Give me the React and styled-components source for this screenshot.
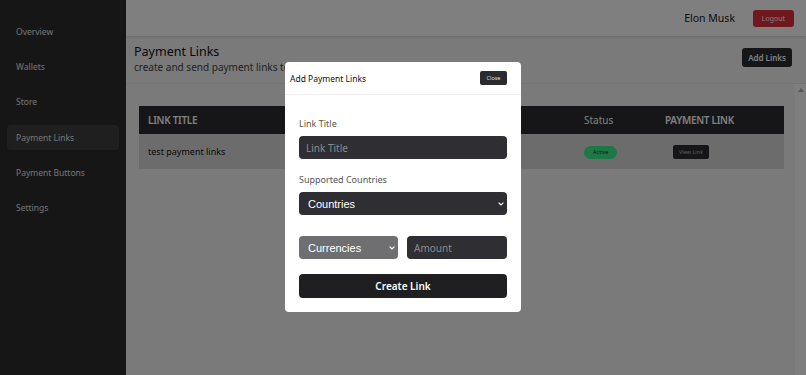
import styled, { createGlobalStyle } from 'styled-components'

const GlobalStyle = createGlobalStyle`
  html, body { margin: 0; padding: 0; height: 100%; }
  body { font-family: "Noto Sans", "Open Sans", sans-serif; background: #f4f4f4; }
  #root { height: 100%; }
  * { box-sizing: border-box; }
`

const NAV = ['Overview', 'Wallets', 'Store', 'Payment Links', 'Payment Buttons', 'Settings']

const Chevron = () => (
  <svg width="6" height="4" viewBox="0 0 6 4">
    <path d="M0.6 0.6 L3 3 L5.4 0.6" fill="none" stroke="#fff" strokeWidth="1.2" />
  </svg>
)

const Dropdown = ({ label, grey }) => (
  <SelectWrap>
    <Select $grey={grey}>
      <option>{label}</option>
    </Select>
    <ChevronBox><Chevron /></ChevronBox>
  </SelectWrap>
)

const App = () => {
  return (
    <Page>
      <GlobalStyle />
      <Sidebar>
        {NAV.map((n) => (
          <NavItem key={n} $active={n === 'Payment Links'}>{n}</NavItem>
        ))}
      </Sidebar>
      <Main>
        <TopBar>
          <UserName>Elon Musk</UserName>
          <LogoutBtn>Logout</LogoutBtn>
        </TopBar>
        <TitleRow>
          <div>
            <PageTitle>Payment Links</PageTitle>
            <SubTitle>create and send payment links to customers</SubTitle>
          </div>
          <DarkBtn>Add Links</DarkBtn>
        </TitleRow>
        <ScrollArea>
          <Content>
            <Table>
              <HeadRow>
                <Cell $w="436px" $bold>LINK TITLE</Cell>
                <Cell $w="81px">Status</Cell>
                <Cell $bold>PAYMENT LINK</Cell>
              </HeadRow>
              <BodyRow>
                <Cell $w="436px">test payment links</Cell>
                <Cell $w="81px"><Badge>Active</Badge></Cell>
                <Cell><SmallBtn>View Link</SmallBtn></Cell>
              </BodyRow>
            </Table>
          </Content>
          <ScrollTrack>
            <svg width="6" height="4" viewBox="0 0 6 4"><path d="M0 4 L3 0 L6 4 Z" fill="#b0b0b0" /></svg>
          </ScrollTrack>
        </ScrollArea>
      </Main>

      <Backdrop>
        <Modal>
          <ModalHead>
            <ModalTitle>Add Payment Links</ModalTitle>
            <CloseBtn>Close</CloseBtn>
          </ModalHead>
          <ModalBody>
            <Label>Link Title</Label>
            <TextInput placeholder="Link Title" />
            <Label $top="15px">Supported Countries</Label>
            <Dropdown label="Countries" />
            <Pair>
              <Dropdown label="Currencies" grey />
              <TextInput placeholder="Amount" />
            </Pair>
            <CreateBtn>Create Link</CreateBtn>
          </ModalBody>
        </Modal>
      </Backdrop>
    </Page>
  )
}

const Page = styled.div`
  position: relative;
  display: flex;
  height: 100vh;
  overflow: hidden;
`

const Sidebar = styled.nav`
  width: 126px;
  flex-shrink: 0;
  background: #2c2c2c;
  padding: 19px 7px 0;
  display: flex;
  flex-direction: column;
  gap: 10.2px;
`

const NavItem = styled.div`
  height: 25px;
  line-height: 25px;
  padding-left: 9px;
  border-radius: 4px;
  font-size: 8.5px;
  color: #e4e4e4;
  background: ${(p) => (p.$active ? '#3e3e3e' : 'transparent')};
`

const Main = styled.main`
  flex: 1;
  display: flex;
  flex-direction: column;
  background: #f4f4f4;
  min-width: 0;
`

const TopBar = styled.header`
  height: 36px;
  background: #fff;
  box-shadow: 0 1px 3px rgba(0, 0, 0, 0.15);
  display: flex;
  align-items: center;
  justify-content: flex-end;
  padding: 0 12px 0 0;
  gap: 18px;
`

const UserName = styled.span`
  font-size: 10.5px;
  color: #222;
`

const LogoutBtn = styled.button`
  font-family: inherit;
  height: 17px;
  width: 41px;
  padding: 0;
  border: none;
  border-radius: 3px;
  background: #e0303a;
  color: #fff;
  font-size: 7px;
`

const TitleRow = styled.div`
  display: flex;
  justify-content: space-between;
  align-items: flex-start;
  padding: 7px 14px 9px 8px;
  border-bottom: 1px solid #e6e6e6;
`

const PageTitle = styled.h1`
  margin: 0;
  font-size: 12.5px;
  font-weight: 400;
  color: #111;
  line-height: 18px;
`

const SubTitle = styled.p`
  margin: 0;
  font-size: 10px;
  color: #444;
  line-height: 13px;
`

const DarkBtn = styled.button`
  margin-top: 5px;
  font-family: inherit;
  height: 19px;
  padding: 0 6px;
  border: none;
  border-radius: 3px;
  background: #2c2c30;
  color: #fff;
  font-size: 8px;
  font-weight: 600;
`

const ScrollArea = styled.div`
  flex: 1;
  display: flex;
`

const Content = styled.div`
  flex: 1;
  padding: 22px 11px 0 13px;
`

const ScrollTrack = styled.div`
  width: 11px;
  background: #fdfdfd;
  display: flex;
  justify-content: center;
  padding-top: 4px;
`

const Table = styled.div`
  display: flex;
  flex-direction: column;
`

const HeadRow = styled.div`
  display: flex;
  align-items: center;
  height: 28px;
  background: #2c2c30;
  color: #fff;
  font-size: 10px;
  padding-left: 9px;
`

const BodyRow = styled.div`
  display: flex;
  align-items: center;
  height: 35px;
  background: #d9d9d9;
  color: #111;
  font-size: 9px;
  padding-left: 9px;
`

const Cell = styled.div`
  width: ${(p) => p.$w || 'auto'};
  flex-shrink: 0;
  font-weight: ${(p) => (p.$bold ? 600 : 400)};
  letter-spacing: ${(p) => (p.$bold ? '-0.3px' : '0')};
`

const Badge = styled.span`
  display: inline-block;
  background: #3cf08a;
  color: #0d3a1e;
  font-size: 5.5px;
  height: 13px;
  line-height: 13px;
  padding: 0 9px;
  border-radius: 7px;
`

const SmallBtn = styled.span`
  display: inline-block;
  margin-left: 8px;
  background: #2c2c30;
  color: #bbb;
  font-size: 5.5px;
  height: 14px;
  line-height: 14px;
  padding: 0 6px;
  border-radius: 2px;
`

const Backdrop = styled.div`
  position: absolute;
  inset: 0;
  background: rgba(0, 0, 0, 0.5);
`

const Modal = styled.div`
  position: absolute;
  left: 285px;
  top: 62px;
  width: 236px;
  background: #fff;
  border-radius: 4px;
`

const ModalHead = styled.div`
  height: 33px;
  display: flex;
  align-items: center;
  justify-content: space-between;
  padding: 0 14px 0 5px;
  border-bottom: 1px solid #eee;
`

const ModalTitle = styled.span`
  font-size: 8.5px;
  color: #111;
`

const CloseBtn = styled.button`
  font-family: inherit;
  height: 14px;
  width: 27px;
  padding: 0;
  border: none;
  border-radius: 2px;
  background: #2c2c30;
  color: #ddd;
  font-size: 5.5px;
`

const ModalBody = styled.div`
  padding: 23px 14px 14px;
  display: flex;
  flex-direction: column;
`

const Label = styled.label`
  font-size: 9px;
  line-height: 12px;
  color: #555;
  margin-top: ${(p) => p.$top || '0'};
  margin-bottom: 6px;
`

const TextInput = styled.input`
  width: 100%;
  min-width: 0;
  height: 23px;
  border: none;
  outline: none;
  border-radius: 4px;
  background: #2e2e33;
  color: #fff;
  font-family: inherit;
  font-size: 10px;
  padding: 0 7px;
  &::placeholder { color: #8a8a8e; }
`

const SelectWrap = styled.div`
  position: relative;
  height: 23px;
`

const Select = styled.select`
  appearance: none;
  display: block;
  width: 100%;
  height: 23px;
  border: none;
  outline: none;
  border-radius: 4px;
  background: ${(p) => (p.$grey ? '#6f6f72' : '#2e2e33')};
  color: #fff;
  font-family: "Liberation Sans", Arial, sans-serif;
  font-size: 11px;
  padding: 0 9px;
`

const ChevronBox = styled.span`
  position: absolute;
  right: 3px;
  top: 50%;
  transform: translateY(-50%);
  display: flex;
  pointer-events: none;
`

const Pair = styled.div`
  display: grid;
  grid-template-columns: 99px 1fr;
  gap: 9px;
  margin-top: 21px;
`

const CreateBtn = styled.button`
  margin-top: 15px;
  height: 24px;
  border: none;
  border-radius: 4px;
  background: #1f1f21;
  color: #fff;
  font-family: inherit;
  font-size: 10px;
  font-weight: 600;
`

export default App
